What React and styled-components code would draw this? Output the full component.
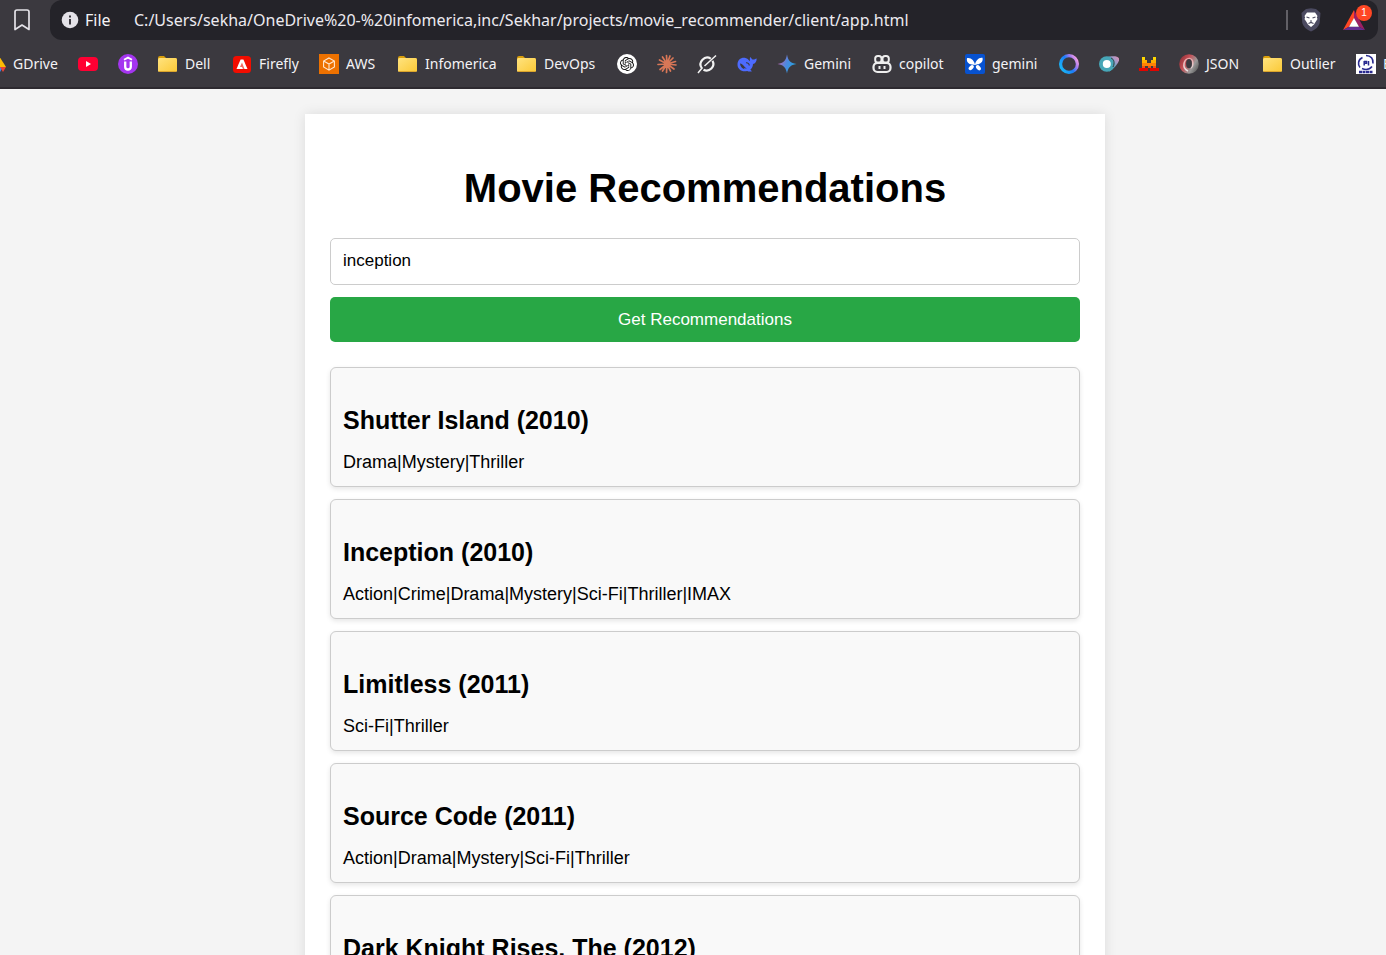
import React, { useState } from 'react';
import styled, { createGlobalStyle } from 'styled-components';
import { SiOpenai } from 'react-icons/si';

const GlobalStyle = createGlobalStyle`
  *, *::before, *::after { box-sizing: border-box; }
  body { margin: 0; background: #f4f4f4; }
`;

const Shell = styled.div`
  display: flex;
  flex-direction: column;
  height: 100vh;
  overflow: hidden;
`;

const Chrome = styled.header`
  flex: none;
  background: #3b393f;
  border-bottom: 2px solid #2d2a30;
  color: #f4f3f6;
  font-family: "Segoe UI", "Noto Sans", sans-serif;
`;

const AddressRow = styled.div`
  display: flex;
  align-items: center;
  height: 40px;
  padding-right: 8px;
`;

const IconButton = styled.button`
  display: flex;
  align-items: center;
  justify-content: center;
  width: 24px;
  height: 40px;
  padding: 0;
  border: 0;
  background: none;
  color: inherit;
`;

const SaveButton = styled(IconButton)`
  width: 50px;
  padding-right: 7px;
`;

const AddressBar = styled.div`
  flex: 1;
  min-width: 0;
  display: flex;
  align-items: center;
  height: 40px;
  padding: 0 8px 0 10px;
  border-radius: 12px;
  background: #242329;
`;

const Scheme = styled.span`
  margin: 0 20px 0 5px;
  width: 29px;
  font-size: 16px;
  line-height: 24px;
  white-space: nowrap;
`;

const UrlInput = styled.input`
  flex: 1;
  min-width: 0;
  height: 40px;
  padding: 0;
  border: 0;
  outline: 0;
  background: none;
  color: #eceaf0;
  font-family: inherit;
  font-size: 16px;
`;

const Divider = styled.span`
  width: 2px;
  height: 20px;
  margin-right: 11px;
  background: #626066;
`;

const RewardsButton = styled(IconButton)`
  position: relative;
  width: 32px;
  margin-left: 15px;
`;

const Badge = styled.span`
  position: absolute;
  top: 5px;
  right: -2px;
  width: 16px;
  height: 16px;
  border-radius: 8px;
  background: #ff4724;
  color: #fff;
  font-size: 10px;
  line-height: 16px;
  text-align: center;
`;

const Bookmarks = styled.nav`
  display: flex;
  align-items: center;
  gap: 20px;
  height: 47px;
  margin-left: -14px;
  overflow: hidden;
`;

const Bookmark = styled.a`
  flex: none;
  display: flex;
  align-items: center;
  gap: 7px;
  color: inherit;
  text-decoration: none;
  svg { flex: none; }
`;

const BookmarkLabel = styled.span`
  width: ${(p) => p.$width}px;
  font-size: 14px;
  line-height: 20px;
  white-space: nowrap;
`;

const Page = styled.main`
  flex: 1;
  min-height: 0;
  overflow: hidden;
  padding: 25px 0 0 24px;
  font-family: Arial, "Liberation Sans", sans-serif;
  color: #000;
`;

const Container = styled.section`
  max-width: 800px;
  margin: 0 auto;
  padding: 50px 25px 25px;
  background: #fff;
  box-shadow: 0 0 12px rgba(0, 0, 0, 0.1);
`;

const Title = styled.h1`
  margin: 0 0 25px;
  font-size: 40px;
  line-height: 49px;
  text-align: center;
`;

const SearchForm = styled.form`
  display: flex;
  flex-direction: column;
  gap: 12px;
  margin-bottom: 25px;
`;

const MovieInput = styled.input`
  width: 100%;
  height: 47px;
  padding: 0 12px 2px;
  border: 1px solid #ccc;
  border-radius: 5px;
  background: #fff;
  color: #000;
  font-family: inherit;
  font-size: 17px;
`;

const SubmitButton = styled.button`
  height: 45px;
  padding: 0;
  border: 0;
  border-radius: 5px;
  background: #28a745;
  color: #fff;
  font-family: inherit;
  font-size: 17px;
`;

const MovieList = styled.div`
  display: flex;
  flex-direction: column;
  gap: 12px;
`;

const MovieCard = styled.article`
  padding: 37px 12px 13px;
  border: 1px solid #ccc;
  border-radius: 6px;
  background: #f9f9f9;
  box-shadow: 0 2px 5px rgba(0, 0, 0, 0.1);
`;

const MovieTitle = styled.h2`
  margin: 0 0 16px;
  font-size: 25px;
  line-height: 30px;
`;

const Genres = styled.p`
  margin: 0;
  font-size: 18px;
  line-height: 22px;
`;

const Icon = ({ children }) => (
  <svg width="20" height="20" viewBox="0 0 20 20" aria-hidden="true">{children}</svg>
);

const Drive = () => (
  <Icon>
    <path d="M7 2h6l7 11h-6z" fill="#fbbc04" />
    <path d="M7 2 0 13l3 5 7-11z" fill="#34a853" />
    <path d="M6 13h11l-3 5H3z" fill="#4285f4" />
    <path d="M14 13h6l-3 5z" fill="#ea4335" />
  </Icon>
);
const Youtube = () => (
  <Icon>
    <rect y="3" width="20" height="14" rx="4" fill="#ff0033" />
    <path d="m8 7 5 3-5 3z" fill="#fff" />
  </Icon>
);
const Udemy = () => (
  <Icon>
    <circle cx="10" cy="10" r="10" fill="#a435f0" />
    <path d="M6 5.800 10 3.600l4 2.200" fill="none" stroke="#fff" strokeWidth="1.800" />
    <path d="M7.200 7.500v5.200c0 3.700 5.600 3.700 5.600 0V7.500" fill="none" stroke="#fff" strokeWidth="2.300" />
  </Icon>
);
const Folder = () => (
  <Icon>
    <defs>
      <linearGradient id="folder" x1="0" y1="0" x2="1" y2="1">
        <stop offset="0" stopColor="#ffe37f" />
        <stop offset="1" stopColor="#fbc936" />
      </linearGradient>
    </defs>
    <path d="M0 4q0-2 2-2h4l2 2h9q2 0 2 2v4H0z" fill="#d99e0b" />
    <rect x="0" y="4" width="19" height="14" rx="1.500" fill="url(#folder)" />
    <path d="M1 17.500h17" stroke="#dca52c" />
  </Icon>
);
const Firefly = () => (
  <Icon>
    <rect x="1" y="2" width="18" height="17" rx="3.500" fill="#f20d00" />
    <path d="M8.600 5.500h2.800l4.100 9.500H4.500z" fill="#fff" />
    <path d="M10 8.500 8 13h2l1 2h1.500z" fill="#f56a60" />
  </Icon>
);
const Aws = () => (
  <Icon>
    <rect width="20" height="20" fill="#ed7100" />
    <path d="m10 4 5.400 3v6L10 16.200 4.600 13V7zM4.600 7 10 10l5.400-3M10 10v6" fill="none" stroke="#ffe7d0" strokeWidth="1.100" />
  </Icon>
);
const ChatGpt = () => (
  <Icon>
    <circle cx="10" cy="10" r="10" fill="#fff" />
    <g transform="translate(3 3)"><SiOpenai size={14} color="#111" /></g>
  </Icon>
);
const Claude = () => (
  <Icon>
    <path
      d="M10 10 9.500 1.500M10 10l3-8M10 10l6-6M10 10l8.500-2.500M10 10l9 1M10 10l7 5M10 10l3.500 7M10 10l-.5 8.500M10 10l-4.500 7M10 10l-7 5.500M10 10l-9 .5M10 10 2.500 6M10 10 5.500 3"
      stroke="#d97757" strokeWidth="1.700" strokeLinecap="round"
    />
    <circle cx="10" cy="10" r="3" fill="#d97757" />
  </Icon>
);
const Grok = () => (
  <Icon>
    <path d="M13.800 4.600A6.700 6.700 0 0 0 4.700 14M6.500 15.800A6.700 6.700 0 0 0 15.500 6.700" fill="none" stroke="#f2f2f2" strokeWidth="2.200" />
    <path d="M1 19 5.500 13.500M7.500 12 19 1.500" fill="none" stroke="#f2f2f2" strokeWidth="1.500" />
  </Icon>
);
const DeepSeek = () => (
  <Icon>
    <path d="M.5 10.500C.5 6 4 3.200 8.500 4c2 .3 2.700 1.600 4.200 3.200.5-1.200-.3-2.700.6-4.200 1 .8 1.200 2 2.200 2.400 1.500.5 2.600-.7 4.200-1-.1 3.200-1.400 5-3.700 5.600-.1 3-1.400 4.700-2.700 5.700l1.700 1.500c-2 .7-3.500.3-4.800-.2C4.500 18.300.5 15 .5 10.500z" fill="#4d6bfe" />
    <path d="M3 9.500c2.800-.2 4.700 4.200 7 5.200-1.500 0-2.500-.7-3.200-1.200.2.800.6 1.200 1 1.700-2.800-.4-4.600-3-4.800-5.700z" fill="#3b393f" />
    <path d="M9 8.700c1.700-.2 3.200 1 3.300 2.800" fill="none" stroke="#3b393f" strokeWidth="1.100" />
  </Icon>
);
const GeminiStar = () => (
  <Icon>
    <defs>
      <linearGradient id="gemini" x1="0" y1="0.300" x2="1" y2="0.700">
        <stop offset="0.100" stopColor="#b06ab3" />
        <stop offset="0.450" stopColor="#4f88e0" />
        <stop offset="1" stopColor="#1ba8dd" />
      </linearGradient>
    </defs>
    <path d="M10 .5C11 6.500 13.500 9 19.500 10 13.500 11 11 13.500 10 19.500 9 13.500 6.500 11 .5 10 6.500 9 9 6.500 10 .5z" fill="url(#gemini)" />
  </Icon>
);
const Copilot = () => (
  <Icon>
    <rect x="1.500" y="8.800" width="17" height="9.200" rx="4" fill="#3b393f" stroke="#eee" strokeWidth="2.200" />
    <rect x="3.200" y="2" width="6.300" height="6.500" rx="2.600" fill="#3b393f" stroke="#eee" strokeWidth="2" />
    <rect x="10.500" y="2" width="6.300" height="6.500" rx="2.600" fill="#3b393f" stroke="#eee" strokeWidth="2" />
    <path d="M7.500 12v3M12.500 12v3" stroke="#eee" strokeWidth="2" />
  </Icon>
);
const Butterfly = () => (
  <Icon>
    <rect width="20" height="20" rx="2" fill="#0752d0" />
    <g fill="#fff">
      <path d="M10 11C9.500 7 6 3.300 2 4.200c-.8 3.300 1.500 6.200 5 6.200zM10 11c.5-4.500 4-8 7.500-7.200C18.500 8 15 10.300 12.500 10.300z" />
      <ellipse cx="6.200" cy="13.600" rx="3" ry="1.900" transform="rotate(-42 6.200 13.600)" />
      <ellipse cx="13.400" cy="13.700" rx="3" ry="1.900" transform="rotate(48 13.400 13.700)" />
    </g>
  </Icon>
);
const MetaRing = () => (
  <Icon>
    <defs>
      <linearGradient id="ring" x1="1" y1="0.100" x2="0" y2="0.700">
        <stop offset="0.050" stopColor="#f7a0e4" />
        <stop offset="0.300" stopColor="#9d7af2" />
        <stop offset="0.550" stopColor="#1c7cf7" />
        <stop offset="1" stopColor="#19b4f7" />
      </linearGradient>
    </defs>
    <circle cx="10" cy="10" r="8.400" fill="none" stroke="url(#ring)" strokeWidth="3.200" />
  </Icon>
);
const Orbit = () => (
  <Icon>
    <defs>
      <linearGradient id="orbit" x1="0" y1="1" x2="1" y2="0">
        <stop offset="0.300" stopColor="#38a4b5" />
        <stop offset="0.700" stopColor="#a59ac8" />
        <stop offset="1" stopColor="#e58cb0" />
      </linearGradient>
    </defs>
    <path d="M8 3c4-1 11-1.500 12 1.500S15 15 10 17.500z" fill="url(#orbit)" />
    <circle cx="7.800" cy="10" r="7.800" fill="#47a6b7" />
    <path d="M12 4c3 1 4 5 2 9" fill="none" stroke="#3b393f" strokeWidth="1" />
    <circle cx="7.800" cy="10" r="4" fill="#fff" />
  </Icon>
);
const Mistral = () => (
  <Icon>
    <path d="M3 3h3v3H3zM14 3h3v3h-3z" fill="#ffd800" />
    <path d="M3 6h5v3H3zM12 6h5v3h-5z" fill="#ffaf00" />
    <path d="M3 9h14v3H3z" fill="#ff8205" />
    <path d="M3 12h3v2H3zM9 12h3v2H9zM14 12h3v2h-3z" fill="#fa500f" />
    <path d="M0 14h9v3H0zM11 14h9v3h-9z" fill="#e10500" />
  </Icon>
);
const Json = () => (
  <Icon>
    <defs>
      <linearGradient id="json" x1="0" y1="0.200" x2="1" y2="0.800">
        <stop offset="0" stopColor="#8b3037" />
        <stop offset="0.350" stopColor="#c84f56" />
        <stop offset="0.700" stopColor="#999" />
        <stop offset="1" stopColor="#555" />
      </linearGradient>
      <linearGradient id="jsonCurl" x1="0" y1="0" x2="0" y2="1">
        <stop offset="0" stopColor="#e8a5a8" />
        <stop offset="1" stopColor="#e6e6e6" />
      </linearGradient>
    </defs>
    <circle cx="10" cy="10" r="9.800" fill="url(#json)" />
    <path d="M9 17C2 14 5 4 10.500 4.500c4.500 1 4 7.500 1 9.700" fill="none" stroke="url(#jsonCurl)" strokeWidth="1.600" />
    <ellipse cx="10" cy="9.700" rx="2.900" ry="4.600" fill="#3b393f" />
  </Icon>
);
const Seal = () => (
  <Icon>
    <rect width="20" height="20" fill="#fff" />
    <g fill="none" stroke="#292a8f">
      <path d="M6.500 3.500C2 5.500 1.500 10.500 4 13.500M10 1.500c5 0 7.500 3.500 7 8M6 14.500c3.500 1.500 7.500 1 10-2" strokeWidth="1.600" />
      <path d="M8.200 7v4.500M8 7.500h2.500v1.800H8M12.500 7v4.500" strokeWidth="1.500" />
      <path d="M3 18h14" strokeWidth="2.500" strokeDasharray="3 .5" />
    </g>
  </Icon>
);

const bookmarks = [
  { name: 'Google Drive', icon: Drive, label: 'GDrive', width: 45 },
  { name: 'YouTube', icon: Youtube },
  { name: 'Udemy', icon: Udemy },
  { name: 'Dell', icon: Folder, label: 'Dell', width: 27 },
  { name: 'Firefly', icon: Firefly, label: 'Firefly', width: 40 },
  { name: 'AWS', icon: Aws, label: 'AWS', width: 32 },
  { name: 'Infomerica', icon: Folder, label: 'Infomerica', width: 72 },
  { name: 'DevOps', icon: Folder, label: 'DevOps', width: 53 },
  { name: 'ChatGPT', icon: ChatGpt },
  { name: 'Claude', icon: Claude },
  { name: 'Grok', icon: Grok },
  { name: 'DeepSeek', icon: DeepSeek },
  { name: 'Gemini', icon: GeminiStar, label: 'Gemini', width: 48 },
  { name: 'Copilot', icon: Copilot, label: 'copilot', width: 46 },
  { name: 'Gemini app', icon: Butterfly, label: 'gemini', width: 47 },
  { name: 'Meta AI', icon: MetaRing },
  { name: 'Orbit', icon: Orbit },
  { name: 'Mistral', icon: Mistral },
  { name: 'JSON', icon: Json, label: 'JSON', width: 37 },
  { name: 'Outlier', icon: Folder, label: 'Outlier', width: 46 },
  { name: 'EPFO', icon: Seal, label: 'E', width: 45 },
];

const movies = [
  { title: 'Shutter Island (2010)', genres: 'Drama|Mystery|Thriller' },
  { title: 'Inception (2010)', genres: 'Action|Crime|Drama|Mystery|Sci-Fi|Thriller|IMAX' },
  { title: 'Limitless (2011)', genres: 'Sci-Fi|Thriller' },
  { title: 'Source Code (2011)', genres: 'Action|Drama|Mystery|Sci-Fi|Thriller' },
  { title: 'Dark Knight Rises, The (2012)' },
];

export default function App() {
  const [query, setQuery] = useState('inception');
  const [url, setUrl] = useState(
    'C:/Users/sekha/OneDrive%20-%20infomerica,inc/Sekhar/projects/movie_recommender/client/app.html'
  );
  return (
    <Shell>
      <GlobalStyle />
      <Chrome>
        <AddressRow>
          <SaveButton type="button" aria-label="Bookmark this tab">
            <svg width="16" height="22" viewBox="0 0 16 22" aria-hidden="true">
              <path d="M1 3q0-2 2-2h10q2 0 2 2v17.500L8 16l-7 4.500z" fill="none" stroke="#e4e2e8" strokeWidth="1.700" strokeLinejoin="round" />
            </svg>
          </SaveButton>
          <AddressBar>
            <Icon>
              <circle cx="10" cy="10" r="8.300" fill="#e4e2e8" />
              <path d="M9 5.500h2v2H9zM9 9h2v5.500H9z" fill="#3b393f" />
            </Icon>
            <Scheme>File</Scheme>
            <UrlInput aria-label="Address" value={url} onChange={(e) => setUrl(e.target.value)} />
            <Divider />
            <IconButton type="button" aria-label="Shields">
              <svg width="20" height="24" viewBox="0 0 20 24" aria-hidden="true">
                <path d="m5 1 5-.8L15 1l4.500 4-.8 10q-1 5-8.700 8.500Q2.300 20 1.300 15L.5 5z" fill="#4b4a60" />
                <path d="M6 4.500h8l2.500 3.500-.7 1.500.7 1.500-2 3-1.500 2.500-3 2.500-3-2.500L5.500 14l-2-3 .7-1.500L3.500 8z" fill="#fff" />
                <path d="m5.500 9 3 1M14.500 9l-3 1M9 13h2M7.500 15.500l2.500-1 2.500 1" fill="none" stroke="#4b4a60" strokeWidth="1.200" />
              </svg>
            </IconButton>
            <RewardsButton type="button" aria-label="Rewards, 1 new">
              <svg width="24" height="20" viewBox="0 1 24 19" preserveAspectRatio="none" aria-hidden="true">
                <path d="M12 1 1 20l6-3 5-8z" fill="#ff4724" />
                <path d="M12 1v8l5 8 6 3z" fill="#9e1f63" />
                <path d="m1 20 6-3h10l6 3z" fill="#662d91" />
                <path d="m12 8.500 5 8.500H7z" fill="#fff" />
              </svg>
              <Badge>1</Badge>
            </RewardsButton>
          </AddressBar>
        </AddressRow>
        <Bookmarks aria-label="Bookmarks">
          {bookmarks.map(({ name, icon: Glyph, label, width }) => (
            <Bookmark key={name} href="#" aria-label={name}>
              <Glyph />
              {label && <BookmarkLabel $width={width}>{label}</BookmarkLabel>}
            </Bookmark>
          ))}
        </Bookmarks>
      </Chrome>
      <Page>
        <Container>
          <Title>Movie Recommendations</Title>
          <SearchForm onSubmit={(e) => e.preventDefault()}>
            <MovieInput
              type="text"
              aria-label="Movie title"
              value={query}
              onChange={(e) => setQuery(e.target.value)}
            />
            <SubmitButton type="submit">Get Recommendations</SubmitButton>
          </SearchForm>
          <MovieList>
            {movies.map(({ title, genres }) => (
              <MovieCard key={title}>
                <MovieTitle>{title}</MovieTitle>
                {genres && <Genres>{genres}</Genres>}
              </MovieCard>
            ))}
          </MovieList>
        </Container>
      </Page>
    </Shell>
  );
}
